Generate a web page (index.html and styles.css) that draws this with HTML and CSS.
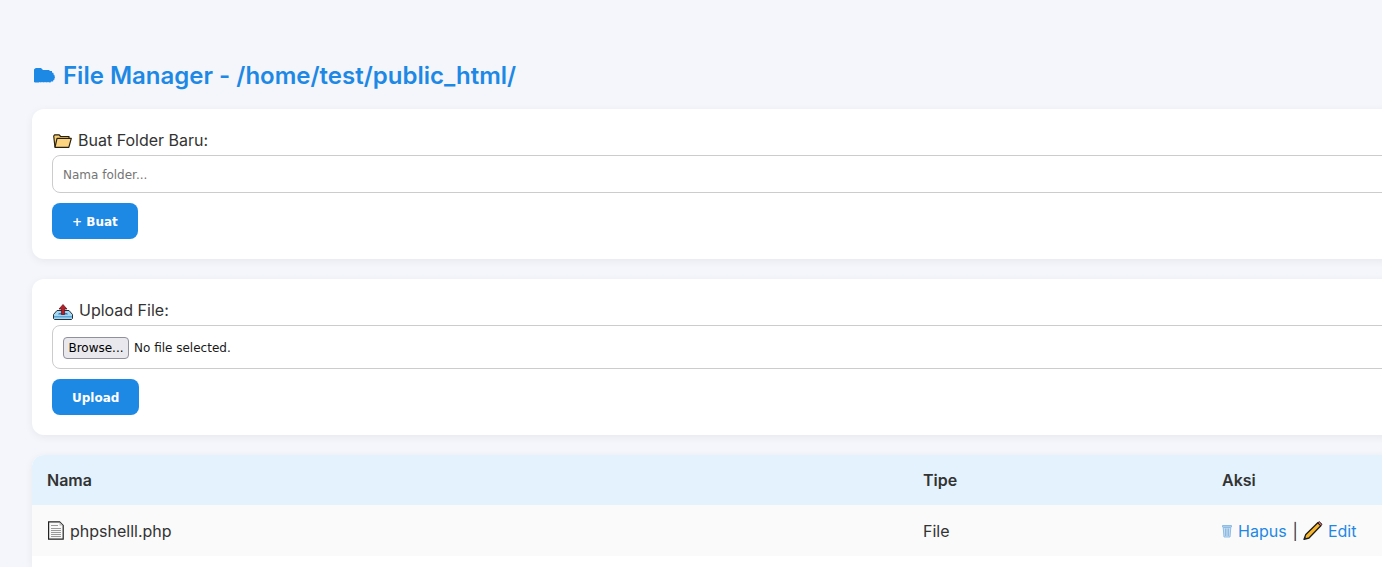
FILE: index.html
```html
<!DOCTYPE html>
<html lang="id">
<head>
<meta charset="utf-8">
<title>File Manager</title>
<link rel="stylesheet" href="styles.css">
</head>
<body>
<main class="page">
  <h2 class="title"><svg class="title-icon" width="21" height="15" viewBox="0 0 21 15"><path fill="#1e88e5" d="M0 4V1.500L1 .5 2 0h5l1 1 1 1h6l1 1h2v1.500l1.500.5v1.500l1 .5v1.500l1 .5-1 1v1.500l-1 .5-.5 1.500H17l-.5 1h-1l-.8-.5-.7.5-.8-.5-.7.5-.8-.5-.7.5-.8-.5-.7.5-.8-.5-.7.5-.8-.5-.7.5-.8-.5-.7.5H1L0 14Z"/></svg>File Manager - /home/test/public_html/</h2>

  <form class="card">
    <label class="field-label"><svg class="folder" width="19" height="14" viewBox="0 0 19 14"><path fill="#f9cf74" stroke="#2a2110" stroke-width="1.200" stroke-linejoin="round" d="M2 13.300 .7 2 1.600.8h4.600L7.600 2.500H16V5"/><path fill="#fdd47f" stroke="#2a2110" stroke-width="1.200" stroke-linejoin="round" d="M4 4.400H18.300L15.800 13.300H2Z"/></svg><span>Buat Folder Baru:</span></label>
    <input class="text-input" type="text" placeholder="Nama folder...">
    <button class="btn btn-make" type="button">+ Buat</button>
  </form>

  <form class="card">
    <label class="field-label"><svg class="upload" width="20" height="16" viewBox="0 0 20 16"><path fill="#a5d6f2" stroke="#26323a" d="M.5 10.500 4 6.500h12l3.500 4v4l-1 1H1.500l-1-1Z"/><path fill="#5aa7d8" d="M1 12h18v1.500H1z"/><path fill="#2f84c4" d="M6 9h8l1 1.500H5Z"/><path fill="#b3202a" stroke="#5c1016" stroke-width=".7" d="M10 .5 14 5H11.600V10.500H8.400V5H6Z"/></svg><span>Upload File:</span></label>
    <div class="file-box"><span class="file-btn">Browse...</span><span class="file-status">No file selected.</span></div>
    <button class="btn btn-upload" type="button">Upload</button>
  </form>

  <section class="table-card">
    <table class="files">
      <thead>
        <tr><th class="col-name">Nama</th><th class="col-type">Tipe</th><th class="col-action">Aksi</th></tr>
      </thead>
      <tbody>
        <tr>
          <td><span class="name-cell"><svg width="18" height="19" viewBox="0 0 18 19"><path fill="#f8f8f8" stroke="#222" stroke-width="1.200" d="M1.600 .8h11l3.600 3.600V18.200H1.600Z"/><path fill="#bbb" d="M12.500 1v3.500H16Z"/><path stroke="#9a9a9a" d="M4 4.500h7M4 7.500h10M4 9.500h10M4 11.500h10M4 13.500h10M4 15.500h10"/></svg>phpshelll.php</span></td>
          <td>File</td>
          <td><span class="actions"><a class="link" href="#"><svg width="10" height="14" viewBox="0 0 10 14"><path fill="#c6def3" stroke="#8fbce4" d="M.5 1.500h9V3H.5Z"/><path fill="#c6def3" stroke="#8fbce4" d="M1.200 3.500h7.600L8 13H2Z"/><path stroke="#6ea6d8" stroke-width=".9" d="M3.800 4.500V12M6.200 4.500V12"/></svg>Hapus</a><span class="sep">|</span><a class="link link-edit" href="#"><svg width="20" height="19" viewBox="0 0 20 19"><path fill="#f7b52c" stroke="#1c1c1c" stroke-width="1.300" stroke-linejoin="round" d="M14.800 1.800 17.800 4.800 6 17 1 18.300 2.800 13.500Z"/><path fill="#e2636e" stroke="#1c1c1c" stroke-width="1" d="M14.800 1.800 16.300.7 19 3.300 17.800 4.800Z"/><path fill="#222" d="M1 18.300 1.800 15.800 3.600 17.600Z"/></svg>Edit</a></span></td>
        </tr>
      </tbody>
    </table>
  </section>
</main>
</body>
</html>
```
FILE: styles.css
```css
* { box-sizing: border-box; }
html, body { margin: 0; height: 567px; overflow: hidden; }
body {
  background: #f4f6fb;
  font-family: Inter, "Liberation Sans", sans-serif;
  color: #333;
  font-size: 16px;
}
.page { width: 1420px; height: 567px; overflow: hidden; padding: 0 0 0 32px; }
.title {
  margin: 0;
  font-size: 24px;
  line-height: 29px;
  font-weight: 600;
  color: #1e88e5;
  white-space: nowrap;
  display: flex;
  align-items: center;
  height: 109px;
  padding: 41px 0 0;
}
.title-icon { margin: 0 8px 0 2px; flex: none; }
.card {
  background: #fff;
  border-radius: 12px;
  box-shadow: 0 2px 8px rgba(0,0,0,.06);
  padding: 20px;
  margin-bottom: 20px;
  display: flex;
  flex-direction: column;
  align-items: flex-start;
}
.field-label { display: flex; align-items: center; height: 26px; line-height: 22px; color: #333; padding-bottom: 4px; }
.folder { margin: 1px 6px 0 1px; }
.upload { margin: 3px 6px 0 1px; }
.text-input, .file-box {
  display: block;
  width: 100%;
  border: 1px solid #ccc;
  border-radius: 8px;
  background: #fff;
  font-family: "DejaVu Sans", sans-serif;
  font-size: 12px;
}
.text-input { height: 38px; padding: 2px 10px 0; color: #333; }
.text-input::placeholder { color: #757575; opacity: 1; }
.file-box { height: 44px; padding: 0 10px; display: flex; align-items: center; color: #1a1a1a; }
.file-btn {
  display: flex;
  align-items: center;
  justify-content: center;
  width: 66px;
  height: 22px;
  margin-top: 1px;
  border: 1px solid #8f8f9d;
  border-radius: 4px;
  background: #e9e9ed;
  color: #000;
}
.file-status { margin: 1px 0 0 5px; }
.btn {
  margin-top: 10px;
  height: 36px;
  border: 0;
  border-radius: 8px;
  background: #1e88e5;
  color: #fff;
  font-family: "DejaVu Sans", sans-serif;
  font-weight: 700;
  font-size: 12px;
  padding: 2px 20px 0;
}
.table-card { background: #fff; border-radius: 12px 0 0 0; box-shadow: 0 2px 8px rgba(0,0,0,.06); overflow: hidden; height: 112px; }
.files { width: 100%; border-collapse: collapse; table-layout: fixed; }
.col-name { width: 876px; }
.col-type { width: 299px; }
.files th {
  background: #e3f2fd;
  text-align: left;
  font-weight: 600;
  height: 50px;
  padding: 0 15px;
}
.files td { background: #fafafa; height: 51px; padding: 0 15px; color: #333; }
.name-cell { display: flex; align-items: center; gap: 5px; }
.actions { display: flex; align-items: center; }
.link { color: #1e88e5; text-decoration: none; display: inline-flex; align-items: center; gap: 6px; }
.link-edit { gap: 5px; }
.sep { margin: 0 5px 0 6px; color: #333; }
```
